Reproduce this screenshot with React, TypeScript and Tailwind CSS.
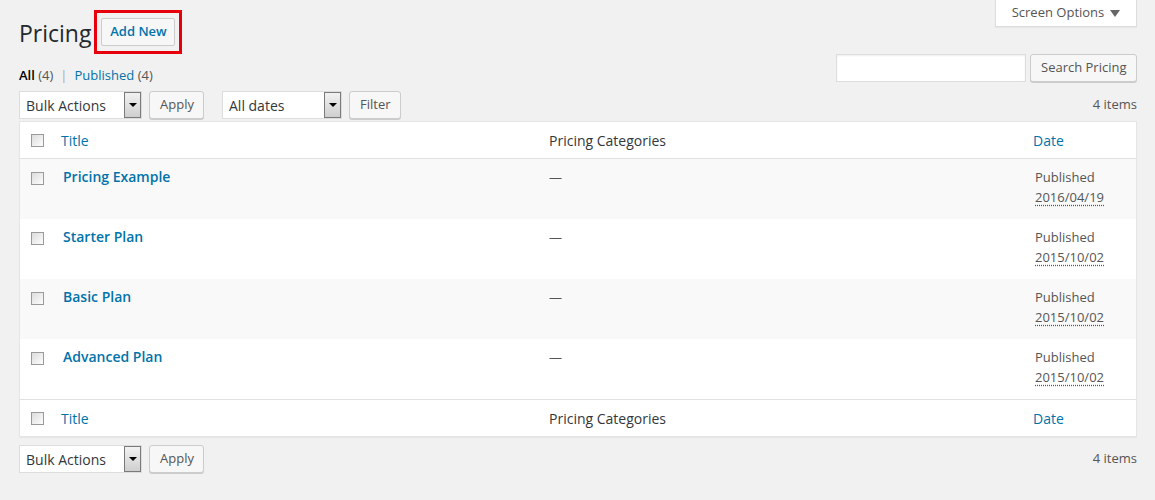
import React from "react";

const rows = [
  { title: "Pricing Example", date: "2016/04/19" },
  { title: "Starter Plan", date: "2015/10/02" },
  { title: "Basic Plan", date: "2015/10/02" },
  { title: "Advanced Plan", date: "2015/10/02" },
];

function Check() {
  return (
    <span className="block size-[13px] border border-[#9a9a9a] bg-gradient-to-br from-[#dcdcdc] to-[#fdfdfd]" />
  );
}

function Select({ label, width }: { label: string; width: string }) {
  return (
    <div className={`flex h-[28px] items-stretch border border-[#ddd] bg-white ${width}`}>
      <span className="flex flex-1 items-center pl-[6px] text-[14px] text-[#32373c]">{label}</span>
      <span className="flex w-[17px] items-center justify-center border border-[#7a7a7a] bg-gradient-to-b from-[#f2f2f2] to-[#cfcfcf]">
        <span className="block h-0 w-0 border-x-[4px] border-t-[4px] border-x-transparent border-t-black" />
      </span>
    </div>
  );
}

function Button({ children, className = "" }: { children: React.ReactNode; className?: string }) {
  return (
    <button
      className={`h-[28px] whitespace-nowrap rounded-[3px] border border-[#ccc] bg-[#f7f7f7] px-[10px] text-[13px] text-[#555] shadow-[0_1px_0_#ccc] ${className}`}
    >
      {children}
    </button>
  );
}

function HeadRow({ top }: { top?: boolean }) {
  return (
    <div
      className={`flex h-[37px] items-center text-[14px] ${top ? "border-b" : "border-t"} border-[#e1e1e1]`}
    >
      <div className="w-[33px] pl-[11px]">
        <Check />
      </div>
      <div className="flex-1 pl-[8px] text-[#0073aa]">Title</div>
      <div className="w-[484px] pl-[8px] text-[#32373c]">Pricing Categories</div>
      <div className="w-[111px] pl-[8px] text-[#0073aa]">Date</div>
    </div>
  );
}

export default function App() {
  return (
    <div
      className="relative min-h-[500px] w-[1155px] bg-[#f1f1f1] pl-[19px] pr-[18px] text-[13px] text-[#444]"
      style={{ fontFamily: '"Open Sans", "Liberation Sans", sans-serif' }}
    >
      <div className="absolute right-[18px] top-0 flex h-[27px] w-[142px] items-center justify-center gap-[6px] border border-t-0 border-[#ddd] bg-white text-[13px] text-[#555] shadow-[0_1px_1px_rgba(0,0,0,0.04)]">
        Screen Options
        <span className="block h-0 w-0 border-x-[5px] border-t-[7px] border-x-transparent border-t-[#666]" />
      </div>

      <div className="flex items-center pt-[10px]">
        <h1 className="pt-[3px] text-[23px] leading-[29px] text-[#23282d]">Pricing</h1>
        <div className="ml-[3px] border-[3px] border-red-600 px-[4px] py-[5px]">
          <button className="h-[28px] w-[74px] rounded-[2px] border border-[#ccc] bg-[#f7f7f7] text-[13px] font-semibold text-[#0073aa]">
            Add New
          </button>
        </div>
      </div>

      <div className="flex items-start justify-between">
        <div className="pt-[11px] text-[13px] leading-[20px]">
          <span className="font-semibold text-black">All</span> <span className="text-[#555]">(4)</span>
          <span className="mx-[7px] text-[#aaa]">|</span>
          <span className="text-[#0073aa]">Published</span> <span className="text-[#555]">(4)</span>
        </div>
        <div className="flex gap-[4px]">
          <div className="h-[28px] w-[190px] border border-[#ddd] bg-white shadow-[inset_0_1px_2px_rgba(0,0,0,0.07)]" />
          <Button className="w-[107px] px-0 text-[#555]">Search Pricing</Button>
        </div>
      </div>

      <div className="mt-[5px] flex h-[30px] items-center">
        <Select label="Bulk Actions" width="w-[123px]" />
        <Button className="ml-[7px] w-[55px] px-0">Apply</Button>
        <Select label="All dates" width="w-[120px] ml-[18px]" />
        <Button className="ml-[7px] w-[52px] px-0">Filter</Button>
        <span className="ml-auto text-[13px] text-[#555]">4 items</span>
      </div>

      <div className="mt-[1px] border border-[#e5e5e5] bg-white shadow-[0_1px_1px_rgba(0,0,0,0.04)]">
        <HeadRow top />
        {rows.map((r, i) => (
          <div key={r.title} className={`flex h-[60px] items-start pt-[8px] ${i % 2 === 0 ? "bg-[#f9f9f9]" : "bg-white"}`}>
            <div className="w-[33px] pl-[11px] pt-[5px]">
              <Check />
            </div>
            <div className="flex-1 pl-[10px] text-[14px] font-semibold leading-[20px] text-[#0073aa]">{r.title}</div>
            <div className="w-[484px] pl-[8px] text-[13px] leading-[20px] text-[#555]">—</div>
            <div className="w-[111px] pl-[10px] text-[13px] leading-[20px] text-[#555]">
              <div>Published</div>
              <div>
                <span className="underline decoration-dotted decoration-[#555] underline-offset-[3px]">{r.date}</span>
              </div>
            </div>
          </div>
        ))}
        <HeadRow />
      </div>

      <div className="mt-[7px] flex h-[30px] items-center">
        <Select label="Bulk Actions" width="w-[123px]" />
        <Button className="ml-[7px] w-[55px] px-0">Apply</Button>
        <span className="ml-auto text-[13px] text-[#555]">4 items</span>
      </div>
    </div>
  );
}
